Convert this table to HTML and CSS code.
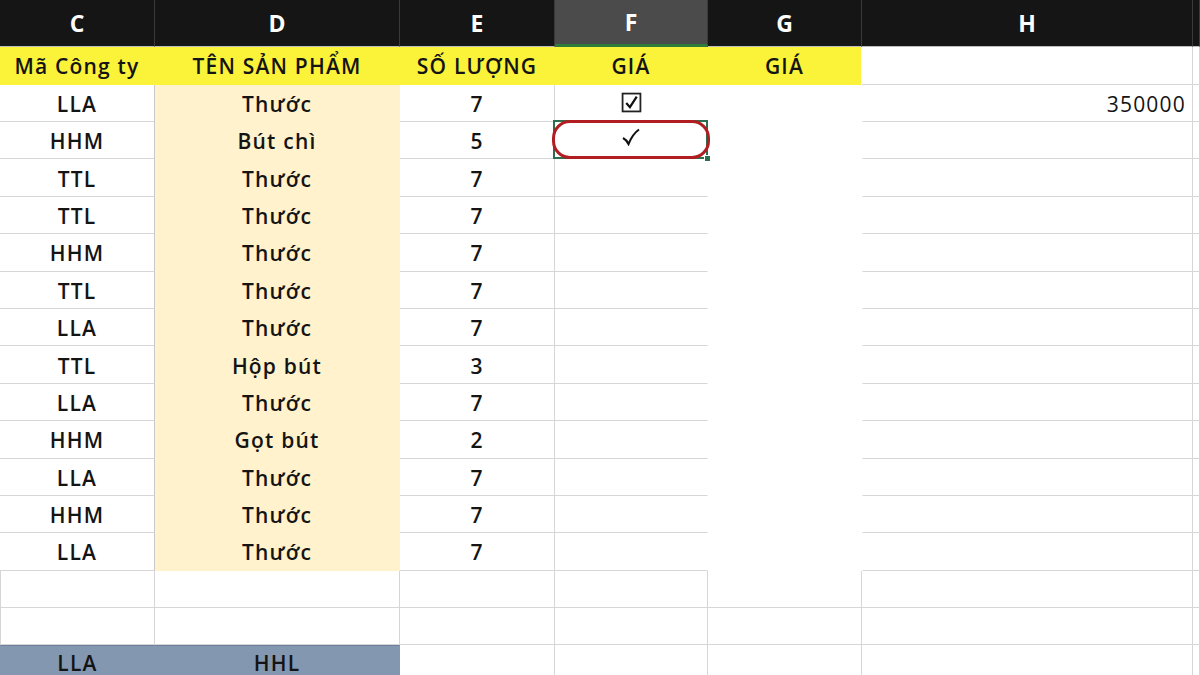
FILE: index.html
```html
<!DOCTYPE html>
<html lang="vi">
<head>
  <meta charset="UTF-8">
  <title>Bảng sản phẩm</title>
  <link rel="stylesheet" href="styles.css">
</head>
<body>
  <div class="sheet">
    <div class="row head">
      <div class="cell">C</div>
      <div class="cell">D</div>
      <div class="cell">E</div>
      <div class="cell active">F</div>
      <div class="cell">G</div>
      <div class="cell">H</div>
      <div class="cell"></div>
    </div>

    <div class="row title">
      <div class="cell">Mã Công ty</div>
      <div class="cell">TÊN SẢN PHẨM</div>
      <div class="cell">SỐ LƯỢNG</div>
      <div class="cell">GIÁ</div>
      <div class="cell">GIÁ</div>
      <div class="cell"></div>
      <div class="cell"></div>
    </div>

    <div class="row data">
      <div class="cell">LLA</div>
      <div class="cell">Thước</div>
      <div class="cell">7</div>
      <div class="cell">
        <svg class="checkbox" width="21" height="21" viewBox="0 0 20 20">
          <rect x="1.5" y="1.5" width="17" height="17" fill="none" stroke="#222" stroke-width="1.7"/>
          <path d="M5 10.5 L8.5 14.5 L15 4.5" fill="none" stroke="#111" stroke-width="2.1"/>
        </svg>
      </div>
      <div class="cell"></div>
      <div class="cell num">350000</div>
      <div class="cell"></div>
    </div>
    <div class="row data">
      <div class="cell">HHM</div>
      <div class="cell">Bút chì</div>
      <div class="cell">5</div>
      <div class="cell selected">
        <svg class="tick" width="20" height="18" viewBox="0 0 20 18">
          <path d="M2 10 C4 11 6 13 7.5 16 C10 10 13 5 18 1.5" fill="none" stroke="#111" stroke-width="2.1"/>
        </svg>
        <span class="mark"></span>
        <span class="handle"></span>
      </div>
      <div class="cell"></div>
      <div class="cell"></div>
      <div class="cell"></div>
    </div>
    <div class="row data">
      <div class="cell">TTL</div><div class="cell">Thước</div><div class="cell">7</div>
      <div class="cell"></div><div class="cell"></div><div class="cell"></div><div class="cell"></div>
    </div>
    <div class="row data">
      <div class="cell">TTL</div><div class="cell">Thước</div><div class="cell">7</div>
      <div class="cell"></div><div class="cell"></div><div class="cell"></div><div class="cell"></div>
    </div>
    <div class="row data">
      <div class="cell">HHM</div><div class="cell">Thước</div><div class="cell">7</div>
      <div class="cell"></div><div class="cell"></div><div class="cell"></div><div class="cell"></div>
    </div>
    <div class="row data">
      <div class="cell">TTL</div><div class="cell">Thước</div><div class="cell">7</div>
      <div class="cell"></div><div class="cell"></div><div class="cell"></div><div class="cell"></div>
    </div>
    <div class="row data">
      <div class="cell">LLA</div><div class="cell">Thước</div><div class="cell">7</div>
      <div class="cell"></div><div class="cell"></div><div class="cell"></div><div class="cell"></div>
    </div>
    <div class="row data">
      <div class="cell">TTL</div><div class="cell">Hộp bút</div><div class="cell">3</div>
      <div class="cell"></div><div class="cell"></div><div class="cell"></div><div class="cell"></div>
    </div>
    <div class="row data">
      <div class="cell">LLA</div><div class="cell">Thước</div><div class="cell">7</div>
      <div class="cell"></div><div class="cell"></div><div class="cell"></div><div class="cell"></div>
    </div>
    <div class="row data">
      <div class="cell">HHM</div><div class="cell">Gọt bút</div><div class="cell">2</div>
      <div class="cell"></div><div class="cell"></div><div class="cell"></div><div class="cell"></div>
    </div>
    <div class="row data">
      <div class="cell">LLA</div><div class="cell">Thước</div><div class="cell">7</div>
      <div class="cell"></div><div class="cell"></div><div class="cell"></div><div class="cell"></div>
    </div>
    <div class="row data">
      <div class="cell">HHM</div><div class="cell">Thước</div><div class="cell">7</div>
      <div class="cell"></div><div class="cell"></div><div class="cell"></div><div class="cell"></div>
    </div>
    <div class="row data">
      <div class="cell">LLA</div><div class="cell">Thước</div><div class="cell">7</div>
      <div class="cell"></div><div class="cell"></div><div class="cell"></div><div class="cell"></div>
    </div>

    <div class="row blank">
      <div class="cell"></div><div class="cell"></div><div class="cell"></div>
      <div class="cell"></div><div class="cell"></div><div class="cell"></div><div class="cell"></div>
    </div>
    <div class="row blank">
      <div class="cell"></div><div class="cell"></div><div class="cell"></div>
      <div class="cell"></div><div class="cell"></div><div class="cell"></div><div class="cell"></div>
    </div>
    <div class="row blank total">
      <div class="cell">LLA</div><div class="cell">HHL</div><div class="cell"></div>
      <div class="cell"></div><div class="cell"></div><div class="cell"></div><div class="cell"></div>
    </div>
  </div>
</body>
</html>
```

FILE: styles.css
```css
:root {
  --grid: #d6d6d6;
  --head-bg: #151515;
  --yellow: #fbf23a;
  --cream: #fff2cc;
  --slate: #8497b0;
  --text: #141414;
}

* {
  margin: 0;
  padding: 0;
  box-sizing: border-box;
}

body {
  width: 1200px;
  height: 675px;
  overflow: hidden;
  background: #fff;
  color: var(--text);
  font-family: "Open Sans", "Noto Sans", sans-serif;
}

.row {
  display: grid;
  grid-template-columns: 155px 245px 155px 153px 154px 331px 7px;
  height: 37.4px;
}

.cell {
  display: flex;
  align-items: center;
  justify-content: center;
  padding-top: 2px;
  border-right: 1px solid var(--grid);
  border-bottom: 1px solid var(--grid);
  font-size: 21px;
  font-weight: 600;
  letter-spacing: 1.2px;
  white-space: nowrap;
}

/* column letters */
.head {
  height: 47px;
  background: var(--head-bg);
}

.head .cell {
  padding-top: 0;
  color: #fff;
  font-size: 23px;
  font-weight: 700;
  letter-spacing: 0;
  border-right-color: #3a3a3a;
  border-bottom: 1px solid #bdbdbd;
}

.head .active {
  background: #4b4b4b;
  border-bottom: 3px solid #2f7b3a;
}

/* yellow title row */
.title {
  height: 37.6px;
}

.title .cell:nth-child(-n+5) {
  background: var(--yellow);
  border-color: var(--yellow);
}

.title .cell:nth-child(5) {
  border-right-color: #fff;
}

/* data rows */
.data .cell:nth-child(2) {
  background: var(--cream);
  border-color: var(--cream);
}

.data .cell:nth-child(1) {
  border-right-color: #c9c9c9;
}

.data .cell:nth-child(4) {
  border-right-color: #fff;
}

.data .cell:nth-child(5) {
  border-color: #fff;
}

.data .cell:nth-child(6) {
  border-left: 1px solid #fff;
}

.cell.num {
  justify-content: flex-end;
  padding-right: 6px;
  font-weight: 500;
  letter-spacing: 1.2px;
}

.checkbox {
  margin-top: -3px;
}

/* selected cell with red annotation */
.selected {
  position: relative;
  border-bottom-color: #fff;
}

.selected::before {
  content: "";
  position: absolute;
  left: -2px;
  top: -2px;
  right: -1px;
  bottom: -1px;
  border: 2px solid #2c6e4e;
}

.selected .tick {
  margin-top: -8px;
}

.mark {
  position: absolute;
  left: -3px;
  top: -2px;
  right: -3px;
  bottom: -1px;
  border: 3px solid #b01e22;
  border-radius: 18px;
}

.handle {
  position: absolute;
  right: -4px;
  bottom: -4px;
  width: 7px;
  height: 7px;
  background: #2c6e4e;
  border: 1px solid #fff;
}

/* empty rows below the list */
.blank .cell:nth-child(1) {
  border-left: 1px solid var(--grid);
}

.total .cell:nth-child(-n+2) {
  align-items: flex-start;
  padding-top: 3px;
  background: var(--slate);
  border-color: var(--slate);
  border-top: 1px solid #6f819a;
}
```
